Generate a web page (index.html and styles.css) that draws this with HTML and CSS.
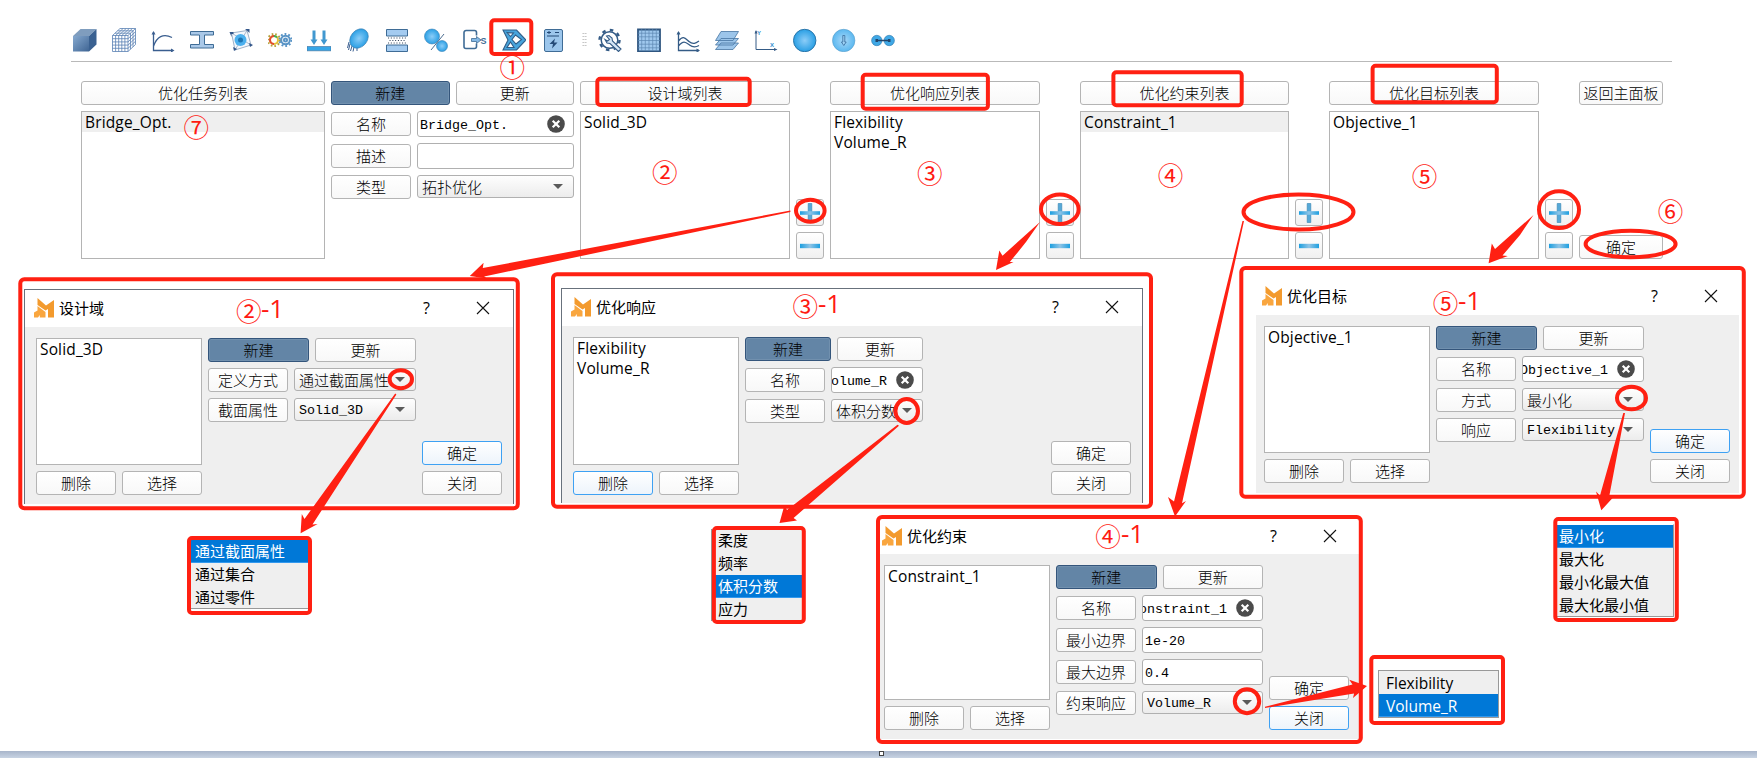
FILE: index.html
```html
<!DOCTYPE html>
<html lang="zh-CN">
<head>
<meta charset="utf-8">
<title>优化任务</title>
<link rel="stylesheet" href="styles.css">
</head>
<body>
<svg width="0" height="0" class="defs">
  <defs>
    <linearGradient id="steel" x1="0" y1="0" x2="1" y2="1"><stop offset="0" stop-color="#86a9cf"/><stop offset="1" stop-color="#3f6594"/></linearGradient>
    <radialGradient id="ball"><stop offset="0" stop-color="#8ccdf8"/><stop offset="1" stop-color="#2a9fe4"/></radialGradient>
    <radialGradient id="pale"><stop offset="0" stop-color="#a9d8f8"/><stop offset="1" stop-color="#5bb8f0"/></radialGradient>
    <linearGradient id="bar"><stop offset="0" stop-color="#1c9fe0"/><stop offset=".5" stop-color="#8fc4e6"/><stop offset="1" stop-color="#1c9fe0"/></linearGradient>
    <symbol id="logo" viewBox="0 0 20 20"><path fill="#f39a2d" d="M3.500 0 12 7.500 20 2v17.500h-6V11l-2.500 1.500L3.500 7z"/><path fill="#f9a63f" d="M0 19.500V14.500l3.500-2V8l8 6v5.500H5.800V17L4 19.500z"/></symbol>
    <symbol id="clear" viewBox="0 0 18 18"><circle cx="9" cy="9" r="8.800" fill="#4b4b4b"/><path d="M5.700 5.700l6.600 6.600M12.300 5.700l-6.600 6.600" stroke="#fff" stroke-width="2.200"/></symbol>
    <symbol id="close" viewBox="0 0 14 14"><path d="M1 1l12 12M13 1 1 13" stroke="#111" stroke-width="1.100"/></symbol>
    <symbol id="plus" viewBox="0 0 20 20"><path d="M8.200.5h3.600v19H8.200z" fill="#55a9d8" stroke="#3483b0" stroke-width=".6"/><path d="M0 8.200h20v3.600H0z" fill="url(#bar)"/></symbol>
    <symbol id="minus" viewBox="0 0 20 20"><path d="M0 7.800h20v4.400H0z" fill="url(#bar)"/></symbol>
  </defs>
</svg>

<header class="toolbar">
  <svg viewBox="0 0 24 24"><path d="M0 8 7.500 1h16L16 8z" fill="#7f9dbe"/><path d="M16 8l7.500-7v15.500L16 23.500z" fill="#3a6191"/><path d="M0 8h16v15.500H0z" fill="url(#steel)"/></svg>
  <svg viewBox="0 0 24 24" fill="none" stroke="#5b82b4" stroke-width=".8"><path d="M.5 7.500h15.500v16H.5zM.5 7.500 8 .5h15.500L16 7.500M23.500.5v16l-7.500 7M3.600 7.500v16M6.700 7.500v16M9.800 7.500v16M12.900 7.500v16M.5 10.700H16M.5 13.900H16M.5 17.100H16M.5 20.300H16M3.600 7.500l7.500-7M6.700 7.500l7.500-7M9.800 7.500l7.500-7M12.900 7.500l7.500-7M3 5.200h15.500M5.500 2.800H21M18.500 5.200v16M21 2.800v16M16 10.700l7.500-7M16 13.900l7.500-7M16 17.100l7.500-7M16 20.300l7.500-7"/></svg>
  <svg viewBox="0 0 24 24" fill="none" stroke="#3a5e8f" stroke-width="1.300"><path d="M2.500 4v18.500H22"/><path d="M2.500 18C6 9 12 5 21 9.500"/><path d="M.5 6.500 2.500 3l2 3.500zM20 20.500l3.500 2-3.500 2z" fill="#3a5e8f" stroke="none"/></svg>
  <svg viewBox="0 0 24 24"><path d="M.5 3.500h23v3.500H14.500v9.500h9V20H.5v-3.500h9V7h-9z" fill="#a9c8e8" stroke="#3f6c96"/></svg>
  <svg viewBox="0 0 24 24"><path d="M2.500 5 18 2.500 22 17 6 22z" fill="#f3f7fc" stroke="#7892b0" stroke-width=".7"/><path d="M2.500 5 22 17M18 2.500 6 22" stroke="#7892b0" stroke-width=".6"/><circle cx="11.500" cy="12" r="6" fill="#4bb0ee"/><circle cx="11.500" cy="12" r="2.500" fill="#1d74b2"/><path d="M.5 4h4v2h-2v3zM16 1h4.500v4l-2-2zM20 15l4 2-3 2zM4 19l4 2-3 2z" fill="#33568a"/></svg>
  <svg viewBox="0 0 24 24" fill="none" stroke-width="2"><circle cx="6" cy="12" r="4" stroke="#e7c437"/><path d="M2 12a4 4 0 0 1 4-4" stroke="#e24a32"/><path d="M6 16a4 4 0 0 1-4-4" stroke="#e24a32"/><path d="M6 8a4 4 0 0 1 3 1.500" stroke="#3fae56"/><circle cx="6" cy="12" r="6" stroke="#b6a03c" stroke-dasharray="1.600 2"/><circle cx="17.500" cy="12" r="4.300" stroke="#5994c6"/><circle cx="17.500" cy="12" r="6" stroke="#5994c6" stroke-dasharray="1.800 2"/><circle cx="17.500" cy="12" r="1.500" stroke="#5994c6"/></svg>
  <svg viewBox="0 0 24 24"><path d="M0 18.500h24v4.300H0z" fill="#36a6e8" stroke="#3f6c96" stroke-width=".6"/><path d="M5.500 2.500h3v9h2L7 17l-3.500-5.500h2zM15.500 2.500h3v9h2L17 17l-3.500-5.500h2z" fill="#4098d0"/></svg>
  <svg viewBox="0 0 24 24"><path d="M3 14 1.500 20M4 16l-1.500 6M6 18l-1.500 5M8 19l-1 4.500M11 19v4" stroke="#3a5e8f"/><ellipse cx="13" cy="10.500" rx="10.500" ry="8.300" transform="rotate(-50 13 10.500)" fill="url(#ball)" stroke="#3b82b5" stroke-width=".7"/></svg>
  <svg viewBox="0 0 24 24"><path d="M1.500 1.500h21V8h-21zM1.500 17h21v6.500h-21z" fill="#a4cbf0" stroke="#3f6c96"/><path d="M3 10h18M4.500 12.500h16M3 15h18" stroke="#3b4a60" stroke-width="1" stroke-dasharray="1.100 1.700"/></svg>
  <svg viewBox="0 0 24 24"><circle cx="8" cy="8.500" r="7.500" fill="url(#ball)" stroke="#3b82b5" stroke-width=".6"/><circle cx="18" cy="18" r="5.500" fill="url(#ball)" stroke="#3b82b5" stroke-width=".6"/><path d="M7 22 20 6" stroke="#4c6d90"/></svg>
  <svg viewBox="0 0 24 24" fill="none"><path d="M13.500 7.500V4.500a2 2 0 0 0-2-2H3a2 2 0 0 0-2 2v14a2 2 0 0 0 2 2h8.500a2 2 0 0 0 2-2v-3" stroke="#3f6c96" stroke-width="1.600"/><path d="M8.500 10.500h5V8.500L18 12l-4.500 3.500v-2h-5z" fill="#84b9e6" stroke="#3f6c96" stroke-width=".8"/><text x="17.500" y="15.500" class="glyph-s">S</text></svg>
  <svg viewBox="0 0 24 24"><path fill-rule="evenodd" d="M1 2h13.500L24 12 14.500 22H1l5-10zM5 4.500l3.500 4L11.500 5zM13.500 7l-3.500 4.500 4 4.500 5.500-4.500zM8.500 14 5 19.500h7z" fill="#48a5dd" stroke="#2f5d88" stroke-width="1.100"/></svg>
  <svg viewBox="0 0 24 24"><rect x="3.500" y="1.500" width="18" height="22" rx="1.500" fill="#9cc6ec" stroke="#3f6c96"/><path d="M6 4.500h4M8 3v3M14 4.500h4M6 8h12" stroke="#244a77" stroke-width="1"/><path d="M14 10.500 8.500 16H12l-1 4.500 5.500-6H13z" fill="#244a77"/></svg>
  <span class="grip"></span>
  <svg viewBox="0 0 24 24" fill="none" stroke="#345b86"><circle cx="11.500" cy="12" r="8.300" stroke-width="1.500"/><circle cx="11.500" cy="12" r="10" stroke-width="2.400" stroke-dasharray="3.500 4.354"/><path d="M8.500 8 11 7.500l3 2.500.5 3 8.500 8-2.500 2.500-8.500-8-3-.5-2-3.500 2.500 1.500 2-1.500z" fill="#d5e6f6" stroke-width="1.100"/></svg>
  <svg viewBox="0 0 24 24"><path d="M1 1.500h22v22H1z" fill="#9fc8ee" stroke="#2f5680" stroke-width="1.800"/><path d="M4.700 1v22M8.300 1v22M12 1v22M15.700 1v22M19.300 1v22M1 5.200h22M1 8.800h22M1 12.500h22M1 16.200h22M1 19.800h22" stroke="#5c86b2" stroke-width=".7"/></svg>
  <svg viewBox="0 0 24 24" fill="none" stroke="#345b86" stroke-width="1.300"><path d="M2.500 4v18.500H23M2.500 13C7 7 9 10 13 13.500s7 1.500 10-.5M2.500 18c5-6 7-4 11-1s7 2 9.500.5"/><path d="M.5 6.500 2.500 3l2 3.500zM20.500 20.500l3.500 2-3.500 2z" fill="#345b86" stroke="none"/></svg>
  <svg viewBox="0 0 24 24" fill="#9cc5ea" stroke="#4675a2" stroke-width=".8"><path d="M.5 21.500 6 15h17.500L18 21.500zM.5 17 6 10.500h17.500L18 17zM.5 12.500 6 3.500h17.500L18 12.500z"/></svg>
  <svg viewBox="0 0 24 24"><path d="M2 3v18.500h20" fill="none" stroke="#345b86"/><path d="M.5 5.500 2 2l1.500 3.500zM20 20l3.500 1.500L20 23z" fill="#345b86"/><text x="3" y="6.500" class="glyph-axis">Y</text><text x="16" y="18.500" class="glyph-axis">X</text></svg>
  <svg viewBox="0 0 24 24"><circle cx="11.700" cy="12.500" r="11.200" fill="url(#ball)" stroke="#2b76aa"/></svg>
  <svg viewBox="0 0 24 24"><circle cx="11.700" cy="12.500" r="11.200" fill="url(#pale)" stroke="#5a9dca" stroke-width=".6"/><path d="M10.800 7.500h2V14h1.400l-2.400 3.500L9.400 14h1.400z" fill="#9ed2f5" stroke="#35699a" stroke-width=".8"/></svg>
  <svg viewBox="0 0 24 24"><circle cx="5.800" cy="12.500" r="5.200" fill="#3fa8e6" stroke="#2b76aa" stroke-width=".6"/><circle cx="18.200" cy="12.500" r="5.200" fill="#3fa8e6" stroke="#2b76aa" stroke-width=".6"/><path d="M5 12.500h14" stroke="#22456b" stroke-width="1.500"/><path d="M4.500 11h2.500v3H4.500zM17 11h2.500v3H17z" fill="#22456b"/></svg>
</header>

<main class="panel">
  <section class="column tasks">
    <div class="btn">优化任务列表</div>
    <div class="list"><div class="item current">Bridge_Opt.</div></div>
  </section>
  <section class="form main-form">
    <div class="row"><div class="btn primary grow">新建</div><div class="btn grow">更新</div></div>
    <div class="row"><div class="btn label">名称</div><div class="input grow">Bridge_Opt.<svg class="clear"><use href="#clear"/></svg></div></div>
    <div class="row"><div class="btn label">描述</div><div class="input grow"></div></div>
    <div class="row"><div class="btn label">类型</div><div class="combo grow">拓扑优化</div></div>
  </section>
  <section class="column domain">
    <div class="btn">设计域列表</div>
    <div class="list"><div class="item">Solid_3D</div></div>
  </section>
  <div class="tools"><div class="btn"><svg><use href="#plus"/></svg></div><div class="btn"><svg><use href="#minus"/></svg></div></div>
  <section class="column">
    <div class="btn">优化响应列表</div>
    <div class="list"><div class="item">Flexibility</div><div class="item">Volume_R</div></div>
  </section>
  <div class="tools"><div class="btn"><svg><use href="#plus"/></svg></div><div class="btn"><svg><use href="#minus"/></svg></div></div>
  <section class="column constraint">
    <div class="btn">优化约束列表</div>
    <div class="list"><div class="item current">Constraint_1</div></div>
  </section>
  <div class="tools"><div class="btn"><svg><use href="#plus"/></svg></div><div class="btn"><svg><use href="#minus"/></svg></div></div>
  <section class="column">
    <div class="btn">优化目标列表</div>
    <div class="list"><div class="item">Objective_1</div></div>
  </section>
  <div class="tools"><div class="btn"><svg><use href="#plus"/></svg></div><div class="btn"><svg><use href="#minus"/></svg></div></div>
  <div class="exit"><div class="btn">返回主面板</div><div class="btn">确定</div></div>
</main>

<section class="dialog bordered d-domain">
  <header><svg class="logo"><use href="#logo"/></svg><h2>设计域</h2><span class="help">?</span><svg class="close"><use href="#close"/></svg></header>
  <div class="body">
    <div class="side"><div class="list"><div class="item">Solid_3D</div></div><div class="row"><div class="btn label">删除</div><div class="btn label">选择</div></div></div>
    <div class="form">
      <div class="row"><div class="btn primary grow">新建</div><div class="btn grow">更新</div></div>
      <div class="row"><div class="btn label">定义方式</div><div class="combo grow">通过截面属性</div></div>
      <div class="row"><div class="btn label">截面属性</div><div class="combo latin grow">Solid_3D</div></div>
    </div>
    <div class="actions"><div class="btn focus">确定</div><div class="btn">关闭</div></div>
  </div>
</section>

<section class="dialog bordered d-response">
  <header><svg class="logo"><use href="#logo"/></svg><h2>优化响应</h2><span class="help">?</span><svg class="close"><use href="#close"/></svg></header>
  <div class="body">
    <div class="side"><div class="list"><div class="item">Flexibility</div><div class="item">Volume_R</div></div><div class="row"><div class="btn label focus">删除</div><div class="btn label">选择</div></div></div>
    <div class="form">
      <div class="row"><div class="btn primary grow">新建</div><div class="btn grow">更新</div></div>
      <div class="row"><div class="btn label">名称</div><div class="input end grow">Volume_R<svg class="clear"><use href="#clear"/></svg></div></div>
      <div class="row"><div class="btn label">类型</div><div class="combo grow">体积分数</div></div>
    </div>
    <div class="actions"><div class="btn">确定</div><div class="btn">关闭</div></div>
  </div>
</section>

<section class="dialog d-constraint">
  <header><svg class="logo"><use href="#logo"/></svg><h2>优化约束</h2><span class="help">?</span><svg class="close"><use href="#close"/></svg></header>
  <div class="body">
    <div class="side"><div class="list"><div class="item">Constraint_1</div></div><div class="row"><div class="btn label">删除</div><div class="btn label">选择</div></div></div>
    <div class="form">
      <div class="row"><div class="btn primary grow">新建</div><div class="btn grow">更新</div></div>
      <div class="row"><div class="btn label">名称</div><div class="input end grow">Constraint_1<svg class="clear"><use href="#clear"/></svg></div></div>
      <div class="row"><div class="btn label">最小边界</div><div class="input grow">1e-20</div></div>
      <div class="row"><div class="btn label">最大边界</div><div class="input grow">0.4</div></div>
      <div class="row"><div class="btn label">约束响应</div><div class="combo latin grow">Volume_R</div></div>
    </div>
    <div class="actions"><div class="btn">确定</div><div class="btn focus">关闭</div></div>
  </div>
</section>

<section class="dialog d-objective">
  <header><svg class="logo"><use href="#logo"/></svg><h2>优化目标</h2><span class="help">?</span><svg class="close"><use href="#close"/></svg></header>
  <div class="body">
    <div class="side"><div class="list"><div class="item">Objective_1</div></div><div class="row"><div class="btn label">删除</div><div class="btn label">选择</div></div></div>
    <div class="form">
      <div class="row"><div class="btn primary grow">新建</div><div class="btn grow">更新</div></div>
      <div class="row"><div class="btn label">名称</div><div class="input end grow">Objective_1<svg class="clear"><use href="#clear"/></svg></div></div>
      <div class="row"><div class="btn label">方式</div><div class="combo grow">最小化</div></div>
      <div class="row"><div class="btn label">响应</div><div class="combo latin grow">Flexibility</div></div>
    </div>
    <div class="actions"><div class="btn focus">确定</div><div class="btn">关闭</div></div>
  </div>
</section>

<div class="menu m-domain"><div class="opt selected">通过截面属性</div><div class="opt">通过集合</div><div class="opt">通过零件</div></div>
<div class="menu m-response"><div class="opt">柔度</div><div class="opt">频率</div><div class="opt selected">体积分数</div><div class="opt">应力</div></div>
<div class="menu m-objective"><div class="opt selected">最小化</div><div class="opt">最大化</div><div class="opt">最小化最大值</div><div class="opt">最大化最小值</div></div>
<div class="menu m-constraint"><div class="opt">Flexibility</div><div class="opt selected">Volume_R</div></div>

<footer class="ruler"><span></span></footer>

<svg class="marks" viewBox="0 0 1757 758">
  <g class="frames">
    <rect x="491.300" y="20.300" width="40" height="33.700" rx="3"/>
    <rect x="597.300" y="78.700" width="152.400" height="26.300" rx="3"/>
    <rect x="862.700" y="74.700" width="125.200" height="34" rx="3"/>
    <rect x="1113.400" y="72.300" width="128.300" height="33" rx="3"/>
    <rect x="1372.600" y="65.700" width="124.200" height="36.500" rx="3"/>
    <rect x="20.300" y="279.200" width="497.500" height="229" rx="4"/>
    <rect x="553" y="274.200" width="598" height="232.600" rx="4"/>
    <rect x="1241.300" y="268" width="502.500" height="228.800" rx="4"/>
    <rect x="878" y="517" width="482.800" height="225" rx="4"/>
    <rect x="189" y="538" width="121" height="75" rx="3"/>
    <rect x="713.900" y="528" width="89.900" height="94" rx="3"/>
    <rect x="1555.300" y="519" width="121.500" height="101" rx="3"/>
    <rect x="1371.300" y="657" width="131.700" height="66" rx="3"/>
    <ellipse cx="810.300" cy="210.700" rx="14.300" ry="11"/>
    <ellipse cx="1059.800" cy="209.300" rx="18.800" ry="14.700"/>
    <ellipse cx="1298.500" cy="212" rx="55" ry="17.500"/>
    <ellipse cx="1559" cy="209.700" rx="20" ry="18.400"/>
    <ellipse cx="1630.600" cy="244" rx="45" ry="13.200"/>
    <ellipse cx="400.800" cy="379.200" rx="11.200" ry="9"/>
    <ellipse cx="906.700" cy="411" rx="11.300" ry="12"/>
    <ellipse cx="1631.500" cy="398" rx="14.500" ry="11.300"/>
    <ellipse cx="1247" cy="701.200" rx="12.200" ry="12"/>
  </g>
  <g class="arrows">
    <path d="M790.400 210.500 482.800 268 483.600 262.700 469.800 276 487 278.500 484.200 276.500 560 260.500 790.400 212z"/>
    <path d="M1040 222 1002.500 255.700 999.300 250.500 996 270 1013.500 262 1009.800 262.100 1026 242z"/>
    <path d="M1242.500 221 1174 501.500 1168 497 1175 516.500 1186 501 1182 503.300 1244 221z"/>
    <path d="M1533.500 215 1495 249 1491.800 243.500 1488.600 263.300 1507.800 256 1502.500 255.600 1520 235z"/>
    <path d="M395.200 393.500 304.500 518.900 301.800 514 300.600 533.300 317.600 524 312.500 524.500 396.400 394.500z"/>
    <path d="M897.500 424.700 787 510 784.500 505 779.500 523 797 520.500 793.600 518 899 425.800z"/>
    <path d="M1623.300 413 1600 495.500 1596 491.500 1601.300 510.300 1613.500 497 1609 497.400 1625 413z"/>
    <path d="M1265 706.800 1352.500 684.500 1349.300 679.700 1367 686 1353 698 1354.100 693.500 1265 708z"/>
  </g>
  <g class="numbers">
    <text x="512.300" y="77">①</text><text x="196.300" y="137">⑦</text><text x="664.700" y="182">②</text><text x="929.700" y="183">③</text><text x="1170.600" y="185">④</text><text x="1424.500" y="186">⑤</text><text x="1670.600" y="221">⑥</text>
    <text x="248.700" y="320.700">②</text><text x="805.300" y="315.700">③</text><text x="1108" y="546.200">④</text><text x="1445.500" y="312.700">⑤</text>
  </g>
  <g class="suffix">
    <text x="261" y="318">-1</text><text x="818" y="313">-1</text><text x="1121" y="543">-1</text><text x="1458" y="310">-1</text>
  </g>
</svg>
</body>
</html>
```
FILE: styles.css
```css
* { box-sizing: border-box; }
body {
  position: relative;
  margin: 0;
  width: 1757px;
  height: 758px;
  overflow: hidden;
  background: #fff;
  color: #000;
  font: 400 15px/20px "Noto Sans CJK SC", sans-serif;
}
.defs { position: absolute; }

.toolbar {
  display: flex;
  gap: 15px;
  align-items: flex-start;
  width: 1601px;
  height: 62px;
  margin-left: 71px;
  padding: 28px 0 0 2px;
  border-bottom: 1px solid #b9b9b9;
}
.toolbar svg { flex: none; width: 24px; height: 24px; }
.grip {
  width: 5px;
  height: 16px;
  margin: 4px -4px 0 2px;
  background: radial-gradient(circle, #bbb 0.6px, transparent 1px) 0 0 / 2.500px 3px;
}
.glyph-s { font: 700 9px "Liberation Sans", sans-serif; fill: #3f6c96; }
.glyph-axis { font: 700 6px "Liberation Sans", sans-serif; fill: #2f8fcf; }

.panel {
  display: flex;
  gap: 6px;
  padding: 19px 0 0 81px;
  height: 197px;
}
.column { display: flex; flex-direction: column; gap: 6px; width: 210px; }
.column .list, .side .list { flex: 1; }
.tasks { width: 244px; }
.constraint { width: 209px; }
.form { display: flex; flex-direction: column; gap: 6px; }
.main-form { width: 243px; }
.row { display: flex; align-items: center; gap: 6px; }
.grow { flex: 1 1 0; min-width: 0; }

.btn {
  flex: none;
  display: flex;
  align-items: center;
  justify-content: center;
  height: 24px;
  border: 1px solid #b4b4b4;
  border-radius: 3px;
  background: linear-gradient(#fff, #f8f8f8);
  font-weight: 300;
  white-space: nowrap;
}
.btn.grow { flex: 1 1 0; }
.btn.label { width: 80px; }
.btn.primary { background: #6385a6; border-color: #34557b; box-shadow: inset 0 0 0 1px #7190ae; }
.btn.focus { border-color: #3ea1f3; background: linear-gradient(#fff, #edf4fb); }
.list { border: 1px solid #b4b4b4; background: #fff; }
.item {
  height: 20px;
  padding-left: 3px;
  letter-spacing: 0.15px;
  font: 400 15.500px/20px "Open Sans", "Noto Sans", sans-serif;
}
.item.current { background: #efefef; }
.input, .combo {
  position: relative;
  display: flex;
  align-items: center;
  border: 1px solid #b0b0b0;
  border-radius: 3px;
  background: #fff;
  white-space: nowrap;
  overflow: hidden;
}
.input, .combo.latin { font-family: "Liberation Mono", monospace; font-size: 13.330px; }
.input { height: 26px; padding: 3px 0 0 2px; }
.input.end { justify-content: flex-end; padding-right: 35px; }
.clear { position: absolute; right: 8px; top: 3px; width: 18px; height: 18px; }
.combo {
  height: 23px;
  margin-bottom: 1px;
  padding-left: 4px;
  font-weight: 300;
  background: linear-gradient(#fefefe, #ececec);
}
.combo.latin { padding-top: 2px; }
.combo::after {
  content: "";
  position: absolute;
  right: 10px;
  top: 8px;
  border: 5px solid transparent;
  border-top-color: #5a5a5a;
  border-bottom: 0;
}
.tools { display: flex; flex-direction: column; justify-content: flex-end; gap: 6px; width: 28px; }
.tools .btn { height: 27px; background: linear-gradient(#fff, #f0f0f0); }
.tools svg { width: 20px; height: 20px; }
.exit { display: flex; flex-direction: column; justify-content: space-between; width: 84px; }

/* Floating dialogs on the canvas */
.dialog { position: absolute; display: flex; flex-direction: column; background: #efefef; }
.dialog.bordered { border: 1px solid #68717c; border-bottom: 0; }
.dialog header { display: flex; align-items: center; background: #fff; }
.logo { width: 20px; height: 20px; margin-right: 5px; }
.dialog h2 { flex: 1; margin: 0; font: 400 15px/20px "Noto Sans CJK SC", sans-serif; }
.help { font: 400 16px/20px "Open Sans", sans-serif; margin-right: 46px; }
.close { width: 14px; height: 14px; }
.body { flex: 1; display: flex; gap: 6px; }
.side { display: flex; flex-direction: column; gap: 6px; width: 166px; }
.body .form { width: 208px; }
.actions { display: flex; flex-direction: column; justify-content: flex-end; gap: 6px; width: 80px; margin-left: auto; }

.d-domain { left: 24px; top: 289px; width: 490px; height: 215px; }
.d-domain header { height: 37px; padding: 0 23px 1px 9px; }
.d-domain .body { padding: 11px 11px 9px; }
.d-response { left: 561px; top: 288px; width: 582px; height: 215px; }
.d-response header { height: 37px; padding: 0 23px 1px 9px; }
.d-response .body { padding: 11px 11px 8px; }
.d-response .form { width: 178px; }
.d-constraint { left: 880px; top: 519px; width: 479px; height: 220px; }
.d-constraint header { height: 35px; padding: 0 22px 2px 2px; }
.d-constraint .body { padding: 11px 10px 9px 4px; }
.d-constraint .form { width: 207px; }
.d-objective { left: 1256px; top: 278px; width: 483px; height: 215px; }
.d-objective header { height: 37px; padding: 0 21px 1px 6px; }
.d-objective .body { padding: 11px 9px 10px 8px; }

.menu { position: absolute; background: #efefef; border: 1px solid #999; }
.opt { height: 23px; padding-left: 4px; font: 400 15px/22px "Open Sans", "Noto Sans CJK SC", sans-serif; white-space: nowrap; }
.opt.selected { background: #0078d7; color: #fff; border-bottom: 1px solid #3399ee; }
.m-domain { left: 190px; top: 539px; width: 119px; height: 70px; }
.m-response { left: 711px; top: 529px; width: 92px; height: 92px; padding-left: 2px; border-width: 0 0 0 1px; }
.m-objective { left: 1556px; top: 524px; width: 118px; height: 93px; border-top-color: #fff; }
.m-objective .opt { padding-left: 2px; }
.m-constraint { left: 1378px; top: 670px; width: 121px; height: 48px; }
.m-constraint .opt { padding-left: 7px; font-size: 15.500px; line-height: 25px; }

.ruler { position: absolute; left: 0; bottom: 0; width: 100%; height: 7px; padding-left: 879px; background: linear-gradient(#a8b5ca, #c7d3e3); }
.ruler span { display: block; width: 5px; height: 5px; border: 1px solid #444; background: #fff; }

.marks { position: absolute; left: 0; top: 0; width: 1757px; height: 758px; }
.frames { fill: none; stroke: #ff2012; stroke-width: 4; }
.arrows { fill: #ff2012; }
.numbers { font: 400 25.500px "Noto Sans CJK SC", sans-serif; fill: #ff1a12; text-anchor: middle; }
.suffix { font: 400 26px "Open Sans", sans-serif; fill: #ff1a12; }
```
